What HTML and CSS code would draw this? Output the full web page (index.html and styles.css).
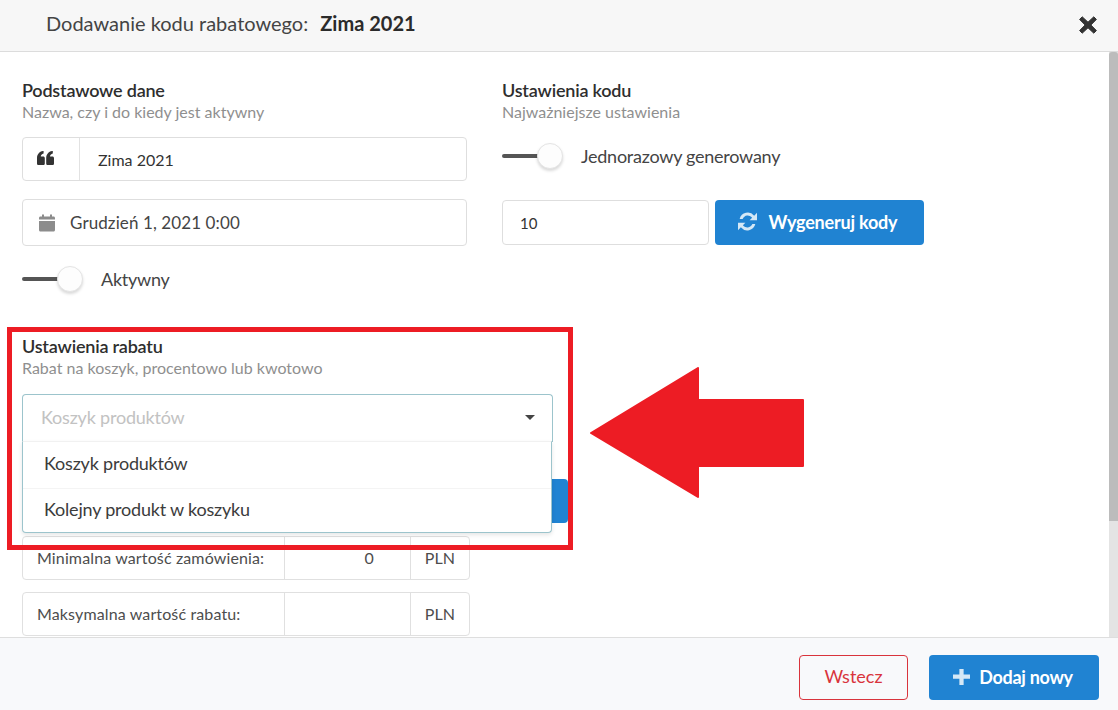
FILE: index.html
```html
<!DOCTYPE html>
<html lang="pl">
<head>
<meta charset="utf-8">
<title>Dodawanie kodu rabatowego</title>
<link rel="stylesheet" href="styles.css">
</head>
<body>
<div class="modal">
  <header class="head">
    <div class="head-title">Dodawanie kodu rabatowego: <strong>Zima 2021</strong></div>
    <svg class="close" viewBox="0 0 18 18"><path d="M3.2 0.8 9 6.2 14.8 0.8 17.4 3.4 11.9 9 17.4 14.6 14.8 17.2 9 11.8 3.2 17.2 0.6 14.6 6.1 9 0.6 3.4Z" fill="#333" stroke="#333" stroke-linejoin="round"/></svg>
  </header>
  <main class="body">
    <div class="content">
      <div class="cols">
        <section class="col-left">
          <h3 class="title">Podstawowe dane</h3>
          <p class="sub">Nazwa, czy i do kiedy jest aktywny</p>
          <div class="field name-field">
            <span class="addon">
              <svg class="quote" viewBox="0 0 17 14"><path d="M0 7C0 3.5 2.2.6 6 0L6.6 0V2.4C4.8 2.8 3.8 4 3.8 5.4H6.2C7.1 5.4 7.8 6.1 7.8 7V12.4C7.8 13.3 7.1 14 6.2 14H1.6C.7 14 0 13.3 0 12.4ZM9.2 7C9.2 3.5 11.4.6 15.2 0L15.8 0V2.4C14 2.8 13 4 13 5.4H15.4C16.3 5.4 17 6.1 17 7V12.4C17 13.3 16.3 14 15.4 14H10.8C9.9 14 9.2 13.3 9.2 12.4Z" fill="#333"/></svg>
            </span>
            <span class="name-value">Zima 2021</span>
          </div>
          <div class="field date-field">
            <svg class="cal" viewBox="0 0 16 17"><path d="M0 6.5H16V15.5C16 16.3 15.4 17 14.5 17H1.5C.6 17 0 16.3 0 15.5ZM0 5V3.5C0 2.6.6 2 1.5 2H3V0H5V2H11V0H13V2H14.5C15.4 2 16 2.6 16 3.5V5Z" fill="#8c8c8c"/></svg>
            <span>Grudzień 1, 2021 0:00</span>
          </div>
          <div class="switch-row active-row">
            <span class="switch"><i class="track"></i><i class="knob"></i></span>
            <span>Aktywny</span>
          </div>
        </section>
        <section class="col-right">
          <h3 class="title">Ustawienia kodu</h3>
          <p class="sub">Najważniejsze ustawienia</p>
          <div class="switch-row code-row">
            <span class="switch"><i class="track"></i><i class="knob"></i></span>
            <span>Jednorazowy generowany</span>
          </div>
          <div class="gen-row">
            <div class="field count">10</div>
            <button class="btn gen">
              <svg class="refresh" viewBox="0 0 16 16"><path d="M13.6 3.1A7 7 0 0 0 1.4 5.8H3.9A4.7 4.7 0 0 1 11.9 4.8L9.8 6.9H16V.7ZM2.4 12.9A7 7 0 0 0 14.6 10.2H12.1A4.7 4.7 0 0 1 4.1 11.2L6.2 9.1H0V15.3Z" fill="#d5e8f6"/></svg>
              Wygeneruj kody
            </button>
          </div>
        </section>
      </div>
      <section class="discount">
        <h3 class="title">Ustawienia rabatu</h3>
        <p class="sub">Rabat na koszyk, procentowo lub kwotowo</p>
        <div class="under-select">
          <div class="select">
            <span>Koszyk produktów</span>
            <i class="caret"></i>
          </div>
          <button class="btn hidden-btn" aria-hidden="true"></button>
        </div>
        <div class="limit">
          <span class="limit-label">Minimalna wartość zamówienia:</span>
          <span class="limit-value">0</span>
          <span class="limit-unit">PLN</span>
        </div>
        <div class="limit">
          <span class="limit-label">Maksymalna wartość rabatu:</span>
          <span class="limit-value"></span>
          <span class="limit-unit">PLN</span>
        </div>
      </section>
    </div>
    <div class="scrollbar"><div class="thumb"></div></div>
    <ul class="menu">
      <li>Koszyk produktów</li>
      <li>Kolejny produkt w koszyku</li>
    </ul>
    <div class="mark"></div>
    <svg class="arrow" viewBox="0 0 216 132"><path d="M2 66 109 1V33H214V99H109V130Z" fill="#ed1c24" stroke="#ed1c24" stroke-width="2" stroke-linejoin="round"/></svg>
  </main>
  <footer class="foot">
    <button class="btn-back">Wstecz</button>
    <button class="btn add">
      <svg class="plus" viewBox="0 0 16 16"><path d="M6 1H10V6H16V10H10V16H6V10H0V6H6Z" fill="#d5e8f6"/></svg>
      Dodaj nowy
    </button>
  </footer>
</div>
</body>
</html>
```
FILE: styles.css
```css
* { box-sizing: border-box; }
html, body { margin: 0; height: 100%; overflow: hidden; }
body { background: #fff; color: #333; font-family: Lato, "Liberation Sans", sans-serif; }
.modal { width: 1118px; height: 710px; display: flex; flex-direction: column; }
.head { height: 52px; flex: none; background: #f7f7f7; border-bottom: 1px solid #dcdcdc; display: flex; align-items: center; justify-content: space-between; padding: 0 21px 2px 46px; }
.head-title { font-size: 20px; color: #444; margin-bottom: 3px; }
.head-title strong { margin-left: 7px; color: #2b2b2b; font-weight: 700; }
.close { width: 18px; height: 18px; }
.body { flex: 1; position: relative; display: flex; overflow: hidden; min-height: 0; }
.content { flex: 1; padding: 28px 0 0 22px; min-width: 0; }
.cols { display: flex; }
.col-left { width: 445px; margin-right: 35px; }
.col-right { width: 422px; }
.title { margin: 0; font-size: 18px; line-height: 20px; font-weight: 600; color: #2e2e2e; letter-spacing: -.2px; }
.sub { margin: 3px 0 0; font-size: 16px; line-height: 18px; color: #8f8f8f; }
.field { border: 1px solid #dedede; border-radius: 4px; background: #fff; display: flex; align-items: center; }
.name-field { height: 44px; margin-top: 16px; font-size: 16px; }
.addon { width: 57px; height: 100%; border-right: 1px solid #e2e2e2; display: flex; align-items: center; padding-left: 14px; flex: none; }
.quote { width: 17px; height: 14px; margin-bottom: 3px; }
.name-value { padding-left: 18px; }
.date-field { height: 47px; margin-top: 18px; padding-left: 16px; font-size: 17px; letter-spacing: .1px; color: #444; }
.cal { width: 16px; height: 18px; margin-right: 15px; }
.switch-row { display: flex; align-items: center; font-size: 18px; letter-spacing: -.25px; color: #444; }
.active-row { margin-top: 19px; height: 28px; }
.code-row { margin-top: 21px; height: 28px; }
.switch { position: relative; width: 62px; height: 26px; flex: none; margin-right: 17px; }
.track { position: absolute; left: 0; top: 11px; width: 40px; height: 4px; background: #555; border-radius: 2px; }
.knob { position: absolute; left: 35px; top: 0; width: 26px; height: 26px; border-radius: 50%; background: #fdfdfd; border: 1px solid #e4e4e4; box-shadow: 0 2px 3px rgba(0,0,0,.15); }
.gen-row { display: flex; gap: 6px; margin-top: 30px; }
.count { width: 207px; height: 45px; padding-left: 17px; font-size: 15px; }
.btn { border: 0; border-radius: 4px; background: #2083d2; color: #fff; font: 700 18px/1 Lato, "Liberation Sans", sans-serif; display: flex; align-items: center; justify-content: center; letter-spacing: -.3px; padding: 0 2px 2px 0; }
.gen { width: 209px; height: 45px; padding-right: 4px; letter-spacing: -.2px; }
.refresh { width: 19px; height: 19px; margin-right: 12px; }
.discount { margin-top: 43px; position: relative; }
.under-select { width: 546px; height: 159px; position: relative; padding-top: 17px; }
.select { width: 531px; height: 48px; border: 1px solid #9cc4cc; border-bottom: 0; border-radius: 4px 4px 0 0; display: flex; align-items: center; justify-content: space-between; padding: 0 17px 3px 18px; font-size: 18px; color: #c2c2c2; letter-spacing: -.2px; background: #fff; }
.caret { width: 0; height: 0; border: 5px solid transparent; border-top: 5px solid #444; border-bottom: 0; }
.hidden-btn { position: absolute; left: 400px; top: 102px; width: 146px; height: 44px; }
.limit { width: 448px; height: 44px; border: 1px solid #e0e0e0; border-radius: 4px; display: flex; align-items: center; font-size: 16px; letter-spacing: .13px; color: #4d4d4d; margin-bottom: 12px; }
.limit-label { width: 262px; height: 100%; padding: 0 0 2px 14px; display: flex; align-items: center; border-right: 1px solid #e0e0e0; flex: none; }
.limit-value { width: 126px; height: 100%; padding: 0 36px 2px 0; display: flex; align-items: center; justify-content: flex-end; border-right: 1px solid #e0e0e0; flex: none; }
.limit-unit { flex: 1; text-align: center; padding-bottom: 2px; }
.scrollbar { width: 9px; flex: none; background: #e4e4e4; }
.thumb { height: 469px; background: #bcbcbc; border-radius: 3px 3px 0 0; }
.menu { position: absolute; left: 22px; top: 389px; width: 530px; height: 92px; margin: 0; padding: 0; list-style: none; background: #fff; border: 1px solid #9cc4cc; border-top: 1px solid #f1f1f1; border-radius: 0 0 4px 4px; box-shadow: 0 2px 4px rgba(0,0,0,.1); font-size: 18px; color: #3c3c3c; letter-spacing: -.2px; }
.menu li { height: 46px; padding: 0 0 5px 21px; display: flex; align-items: center; }
.menu li + li { border-top: 1px solid #f4f4f4; }
.mark { position: absolute; left: 7px; top: 275px; width: 566px; height: 223px; border: 5px solid #ed1c24; pointer-events: none; }
.arrow { position: absolute; left: 589px; top: 315px; width: 216px; height: 132px; }
.foot { height: 73px; flex: none; background: #f8f9fb; border-top: 1px solid #dedede; display: flex; align-items: center; justify-content: flex-end; padding: 7px 19px 0 0; gap: 21px; }
.btn-back { width: 109px; height: 45px; border: 1px solid #d9343c; border-radius: 4px; background: transparent; color: #d9343c; font: 400 18px Lato, "Liberation Sans", sans-serif; padding: 0 0 3px; }
.add { width: 170px; height: 45px; }
.plus { width: 17px; height: 17px; margin-right: 9px; }
```
